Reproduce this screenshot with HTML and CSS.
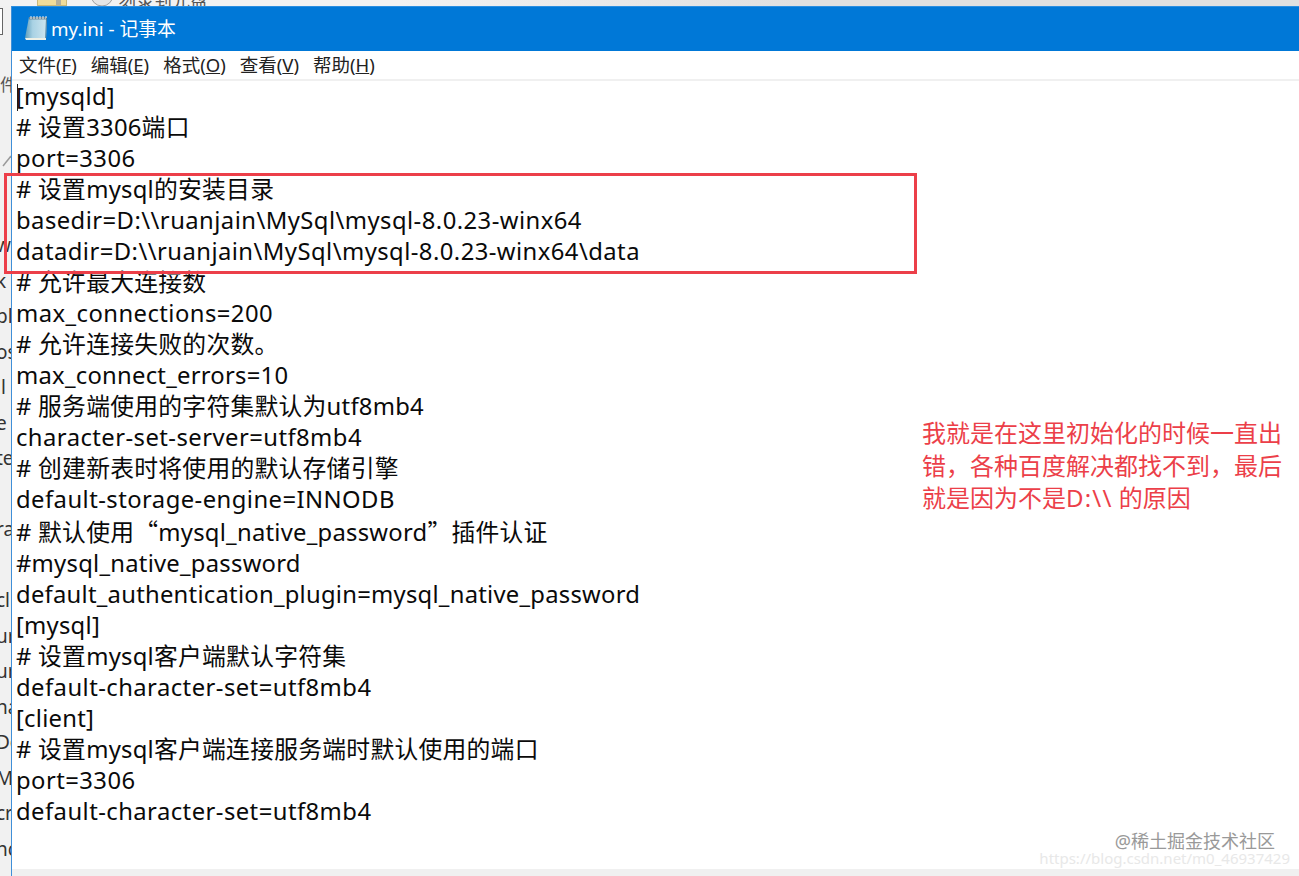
FILE: index.html
```html
<!DOCTYPE html>
<html lang="zh-CN">
<head>
    <meta charset="UTF-8">
    <title>my.ini - 记事本</title>
    <link rel="stylesheet" href="styles.css">
</head>
<body>

<div class="desktop">
    <div class="explorer-top">
        <svg class="folder-icon" viewBox="0 0 30 6"><rect x="0.5" y="-1" width="29" height="6.5" fill="#f0dc9a" stroke="#c9b878"/><rect x="19" y="0" width="5" height="5" fill="#b5b09c"/></svg>
        <svg class="disc-icon" viewBox="0 0 24 6"><path d="M1 -5a11 11 0 0 0 22 0" fill="#e6e6e6" stroke="#a0a0a0"/></svg>
        <span class="burn-label">刻录到光盘</span>
    </div>
    <ul class="explorer-side">
        <li class="side-cjk">件</li>
        <li class="side-arrow">
            <svg viewBox="0 0 11 14"><path d="M3 13l8-10" stroke="#9a9a9a" stroke-width="1.5" fill="none"/></svg>
        </li>
        <li>we</li>
        <li>k l</li>
        <li>bl</li>
        <li>os</li>
        <li>il</li>
        <li>e</li>
        <li>te</li>
        <li>&nbsp;</li>
        <li>ra</li>
        <li>&nbsp;</li>
        <li>cl</li>
        <li>ur</li>
        <li>ur</li>
        <li>na</li>
        <li>Do</li>
        <li>Mi</li>
        <li>cr</li>
        <li>nc</li>
    </ul>

    <article class="notepad">
        <header class="titlebar">
            <svg class="app-icon" viewBox="0 0 24 26">
                <defs>
                    <linearGradient id="page" x1="0" y1="0" x2="1" y2="0">
                        <stop offset="0" stop-color="#5f9dbb"/>
                        <stop offset="0.35" stop-color="#a9d2e4"/>
                        <stop offset="1" stop-color="#cfe6ef"/>
                    </linearGradient>
                </defs>
                <path d="M5 2h18l-1 21H1z" fill="url(#page)"/>
                <path d="M1 23h21l0 2H2z" fill="#eef0e6"/>
                <path d="M5 2h18v2.500H5z" fill="#6f8a99"/>
                <path d="M7 1v3M10 1v3M13 1v3M16 1v3M19 1v3M22 1v3" stroke="#e8eef2" stroke-width="1"/>
                <path d="M22.500 3l-.8 20" stroke="#4d7f9c" stroke-width="1"/>
            </svg>
            <h1>my.ini - 记事本</h1>
        </header>
        <nav class="menubar">
            <span>文件(<u>F</u>)</span>
            <span>编辑(<u>E</u>)</span>
            <span>格式(<u>O</u>)</span>
            <span>查看(<u>V</u>)</span>
            <span>帮助(<u>H</u>)</span>
        </nav>
        <pre class="content">[mysqld]
# 设置3306端口
<span class="wide">port=3306</span>
# 设置mysql的安装目录
<span class="wide">basedir=D:\\ruanjain\MySql\mysql-8.0.23-winx64</span>
<span class="wide">datadir=D:\\ruanjain\MySql\mysql-8.0.23-winx64\data</span>
# 允许最大连接数
<span class="wide">max_connections=200</span>
# 允许连接失败的次数。
max_connect_errors=10
# 服务端使用的字符集默认为utf8mb4
<span class="wide">character-set-server=utf8mb4</span>
# 创建新表时将使用的默认存储引擎
<span class="wide">default-storage-engine=INNODB</span>
# 默认使用<span class="cjk-quote">“</span>mysql_native_password<span class="cjk-quote">”</span>插件认证
#mysql_native_password
default_authentication_plugin=mysql_native_password
[mysql]
# 设置mysql客户端默认字符集
<span class="wide">default-character-set=utf8mb4</span>
[client]
# 设置mysql客户端连接服务端时默认使用的端口
<span class="wide">port=3306</span>
<span class="wide">default-character-set=utf8mb4</span></pre>
        <div class="statusbar"></div>
    </article>

    <div class="highlight-box"></div>
    <p class="annotation">我就是在这里初始化的时候一直出<br>错，各种百度解决都找不到，最后<br>就是因为不是<span class="annotation-path">D:\\</span> 的原因</p>
    <div class="watermark">
        <span class="mark-juejin">@稀土掘金技术社区</span>
        <span class="mark-csdn">https://blog.csdn.net/m0_46937429</span>
    </div>
    <div class="side-box"></div>
</div>

</body>
</html>
```

FILE: styles.css
```css
* {
    box-sizing: border-box;
}

html,
body {
    margin: 0;
    padding: 0;
    height: 100%;
    overflow: hidden;
}

body {
    font-family: "Noto Sans", "Noto Sans CJK SC", sans-serif;
    background-color: #f1f1f1;
}

.desktop {
    position: relative;
    display: grid;
    grid-template-columns: 11px 1fr;
    grid-template-rows: 6px 1fr;
    height: 876px;
}

.explorer-top {
    grid-column: 1 / 3;
    display: flex;
    align-items: flex-end;
    overflow: hidden;
    padding-left: 37px;
    background: linear-gradient(90deg, #f2f2f2 0, #f2f2f2 400px, #e0e0e0 800px);
}

.folder-icon {
    width: 30px;
    height: 6px;
    flex: none;
}

.disc-icon {
    width: 24px;
    height: 6px;
    flex: none;
    margin-left: 23px;
}

.burn-label {
    margin-left: 4px;
    height: 6px;
    line-height: 0;
    font-size: 18px;
    color: #555555;
}

.explorer-side {
    list-style: none;
    margin: 0;
    padding: 51px 0 0;
    overflow: hidden;
    font-size: 19px;
    line-height: 35.5px;
    color: #333333;
    background-color: #f1f1f1;
    white-space: nowrap;
}

.explorer-side li {
    height: 35.5px;
    text-indent: -4px;
}

.explorer-side .side-cjk {
    height: 96px;
    line-height: 56px;
    font-size: 17px;
    color: #555555;
    text-indent: 0;
}

.explorer-side .side-arrow {
    height: 75px;
    line-height: 20px;
    text-indent: 0;
}

.side-arrow svg {
    display: block;
    width: 11px;
    height: 14px;
}

.side-box {
    position: absolute;
    left: -1px;
    top: 8px;
    width: 4px;
    height: 27px;
    border: 1px solid #666666;
    background-color: #ffffff;
}

.notepad {
    display: flex;
    flex-direction: column;
    min-width: 0;
    border-left: 1px solid #3f8fd8;
    background-color: #ffffff;
}

.titlebar {
    display: flex;
    align-items: center;
    gap: 3px;
    height: 45px;
    padding: 0 0 3px 12px;
    background-color: #0078d7;
    border-top: 1px solid #2a8ee0;
}

.app-icon {
    width: 24px;
    height: 26px;
    flex: none;
}

.titlebar h1 {
    margin: 0;
    font-size: 18.800px;
    font-weight: 400;
    color: #ffffff;
}

.menubar {
    display: flex;
    gap: 14px;
    height: 30px;
    padding: 0 0 3px 7px;
    align-items: center;
    font-size: 18.500px;
    color: #222222;
    border-bottom: 2px solid #f0f0f0;
}

.content {
    flex: 1;
    margin: 0;
    padding: 0 0 0 4px;
    font-family: "Noto Sans", "Noto Sans CJK SC", sans-serif;
    font-size: 23.800px;
    letter-spacing: 0.250px;
    line-height: 31px;
    color: #0a0a0a;
    overflow: hidden;
    background: linear-gradient(#222222, #222222) 5px 3px / 1px 27px no-repeat;
}

.wide {
    letter-spacing: 0.450px;
}

.cjk-quote {
    font-family: "Noto Sans CJK SC", sans-serif;
}

.statusbar {
    height: 7px;
    background-color: #f0f0f0;
}

.highlight-box {
    position: absolute;
    left: 4px;
    top: 173px;
    width: 913px;
    height: 101px;
    border: 3px solid #ec3f49;
}

.annotation {
    position: absolute;
    left: 922px;
    top: 417px;
    margin: 0;
    font-size: 24px;
    line-height: 32.500px;
    color: #ec3f49;
}

.annotation-path {
    letter-spacing: 1.200px;
}

.watermark {
    position: absolute;
    right: 9px;
    bottom: 9px;
    display: flex;
    flex-direction: column;
    align-items: flex-end;
}

.mark-juejin {
    margin-right: 15px;
    font-size: 18px;
    line-height: 18px;
    color: #999999;
}

.mark-csdn {
    font-size: 15px;
    line-height: 17px;
    color: #e8e8e8;
}
```
